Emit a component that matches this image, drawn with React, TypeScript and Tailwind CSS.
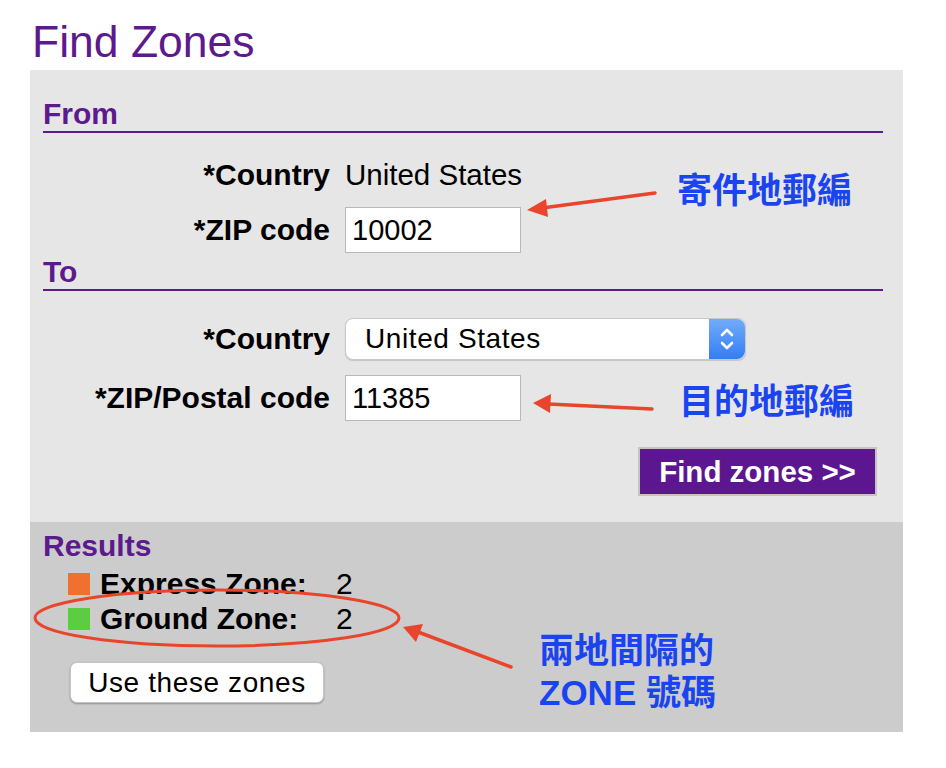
import React from 'react';

const font = { fontFamily: '"Liberation Sans", Arial, Helvetica, sans-serif' };

function Label({ children }: { children: React.ReactNode }) {
  return <div className="w-[287px] text-right font-bold text-black">{children}</div>;
}

function ZipInput({ value }: { value: string }) {
  return (
    <div className="flex h-[46px] w-[176px] items-center border border-[#b9b9b9] bg-white pl-[6px] text-[29px] text-black">
      {value}
    </div>
  );
}

function Heading({ children }: { children: React.ReactNode }) {
  return (
    <div>
      <div className="h-[28px] text-[30px] font-bold leading-none text-[#5c1a8e]">{children}</div>
      <div className="mt-[4px] h-[2px] w-[840px] bg-[#5c1a8e]" />
    </div>
  );
}

function Stepper() {
  return (
    <div className="flex h-full w-[36px] items-center justify-center rounded-r-[8px] bg-gradient-to-b from-[#72abf8] to-[#337cf5]">
      <svg width="16" height="26" viewBox="0 0 16 26" fill="none" stroke="white" strokeWidth="2.6" strokeLinecap="round" strokeLinejoin="round">
        <path d="M3 9 L8 4 L13 9" />
        <path d="M3 17 L8 22 L13 17" />
      </svg>
    </div>
  );
}

function Note({ children, className }: { children: React.ReactNode; className: string }) {
  return (
    <div
      className={`absolute text-[35px] font-bold leading-[42px] text-[#1a44f0] ${className}`}
      style={{ fontFamily: '"Liberation Sans", "Noto Sans CJK TC", sans-serif' }}
    >
      {children}
    </div>
  );
}

export default function App() {
  return (
    <div className="relative h-[768px] w-[946px] overflow-hidden bg-white" style={font}>
      <h1 className="h-[70px] pl-[32px] pt-[20px] text-[44.5px] leading-none text-[#5c1a8e]">Find Zones</h1>

      <div className="ml-[30px] w-[873px]">
        {/* form */}
        <div className="bg-[#e6e6e6] pl-[13px] pr-[26px] pt-[29px] pb-[26px] text-[30px] leading-none">
          <Heading>From</Heading>
          <div className="mt-[19px] flex h-[46px] items-center gap-[15px]">
            <Label>*Country</Label>
            <div className="text-[29.5px] text-black">United States</div>
          </div>
          <div className="mt-[9px] flex items-center gap-[15px]">
            <Label>*ZIP code</Label>
            <ZipInput value="10002" />
          </div>

          <div className="mt-[4px]">
            <Heading>To</Heading>
          </div>
          <div className="mt-[25px] flex h-[46px] items-center gap-[15px]">
            <Label>*Country</Label>
            <div className="flex h-[42px] w-[401px] items-center rounded-[8px] border border-[#c8c8c8] bg-white shadow-[0_1px_1px_rgba(0,0,0,0.15)]">
              <div className="flex-1 pl-[19px] text-[28px] tracking-[0.6px] text-black">United States</div>
              <Stepper />
            </div>
          </div>
          <div className="mt-[13px] flex items-center gap-[15px]">
            <Label>*ZIP/Postal code</Label>
            <ZipInput value="11385" />
          </div>

          <div className="mt-[26px] flex justify-end">
            <button className="flex h-[49px] w-[239px] items-center justify-center border-2 border-[#c4c4c4] bg-[#5c1790] text-[29.5px] font-bold text-white">
              Find zones &gt;&gt;
            </button>
          </div>
        </div>

        {/* results */}
        <div className="h-[210px] bg-[#cccccc] pl-[13px] pt-[9px] text-[30px] leading-none">
          <div className="h-[28px] font-bold text-[#5c1a8e]">Results</div>
          <div className="mt-[7px] flex h-[35px] items-center pl-[25px]">
            <div className="h-[22px] w-[22px] bg-[#f07030]" />
            <div className="ml-[10px] w-[236px] font-bold text-black">Express Zone:</div>
            <div className="text-black">2</div>
          </div>
          <div className="flex h-[35px] items-center pl-[25px]">
            <div className="h-[22px] w-[22px] bg-[#5ccc40]" />
            <div className="ml-[10px] w-[236px] font-bold text-black">Ground Zone:</div>
            <div className="text-black">2</div>
          </div>
          <div className="mt-[26px] pl-[27px]">
            <button className="flex h-[41px] w-[254px] items-center justify-center rounded-[7px] border border-[#c4c4c4] bg-white text-[28px] tracking-[0.6px] text-black shadow-[0_1px_2px_rgba(0,0,0,0.3)]">
              Use these zones
            </button>
          </div>
        </div>
      </div>

      {/* annotations */}
      <svg className="pointer-events-none absolute left-0 top-0" width="946" height="768" viewBox="0 0 946 768">
        <g stroke="#e8452c" strokeWidth="3.5" fill="none" strokeLinecap="round">
          <line x1="655" y1="193" x2="542" y2="208" />
          <line x1="652" y1="409" x2="548" y2="404" />
          <line x1="511" y1="667" x2="418" y2="632" />
          <ellipse cx="217" cy="618" rx="182" ry="28" strokeWidth="3" />
        </g>
        <g fill="#e8452c">
          <polygon points="527,210 546,199 548,217" />
          <polygon points="533,403 551,394 550,413" />
          <polygon points="403,627 423,624 416,642" />
        </g>
      </svg>
      <Note className="left-[677px] top-[170px]">寄件地郵編</Note>
      <Note className="left-[679px] top-[381px]">目的地郵編</Note>
      <Note className="left-[539px] top-[630px]">
        <div>兩地間隔的</div>
        <div>ZONE 號碼</div>
      </Note>
    </div>
  );
}
